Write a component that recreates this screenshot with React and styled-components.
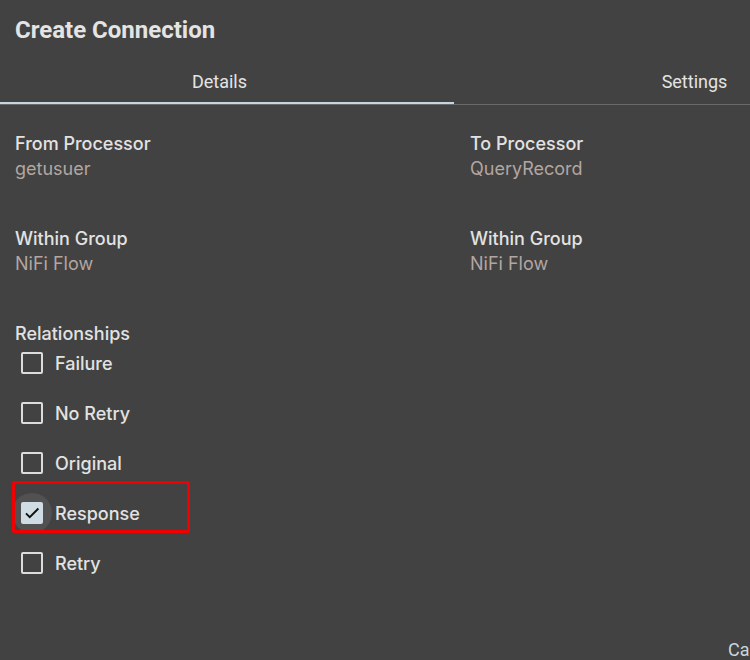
import styled, { createGlobalStyle } from 'styled-components';

const GlobalStyle = createGlobalStyle`
    html, body {
        margin: 0;
        padding: 0;
        background: #424242;
        overflow: hidden;
    }
`;

const relationships = [
    { name: 'Failure', checked: false },
    { name: 'No Retry', checked: false },
    { name: 'Original', checked: false },
    { name: 'Response', checked: true, highlight: true },
    { name: 'Retry', checked: false },
];

export default function App() {
    return (
        <Dialog>
            <GlobalStyle />
            <Title>Create Connection</Title>
            <Tabs>
                <Tab $active $width="454px">Details</Tab>
                <Tab $width="496px">Settings</Tab>
            </Tabs>
            <Body>
                <Grid>
                    <Field>
                        <Label>From Processor</Label>
                        <Value>getusuer</Value>
                    </Field>
                    <Field>
                        <Label>To Processor</Label>
                        <Value>QueryRecord</Value>
                    </Field>
                    <Field>
                        <Label>Within Group</Label>
                        <Value>NiFi Flow</Value>
                    </Field>
                    <Field>
                        <Label>Within Group</Label>
                        <Value>NiFi Flow</Value>
                    </Field>
                </Grid>
                <Label>Relationships</Label>
                <List>
                    {relationships.map(r => (
                        <Row key={r.name}>
                            {r.highlight && <Highlight />}
                            <BoxWrap $checked={r.checked}>
                                <Box $checked={r.checked}>
                                    {r.checked && (
                                        <svg width="20" height="20" viewBox="0 0 24 24">
                                            <path
                                                d="M4 12.5l5 5L20.5 6"
                                                fill="none"
                                                stroke="#111"
                                                strokeWidth="2.6"
                                            />
                                        </svg>
                                    )}
                                </Box>
                            </BoxWrap>
                            <RowText>{r.name}</RowText>
                        </Row>
                    ))}
                </List>
            </Body>
            <Footer>
                <CancelButton>Cancel</CancelButton>
            </Footer>
        </Dialog>
    );
}

const Dialog = styled.div`
    width: 950px;
    height: 660px;
    display: flex;
    flex-direction: column;
    background: #424242;
    font-family: Inter, 'Noto Sans', sans-serif;
`;

const Title = styled.h1`
    margin: 0;
    padding: 16px 15px;
    line-height: 28px;
    font-family: Roboto, 'Liberation Sans', sans-serif;
    font-size: 24px;
    font-weight: 700;
    color: #e4e4e4;
`;

const Tabs = styled.div`
    display: flex;
    border-bottom: 1px solid #6a6a6a;
`;

const Tab = styled.div`
    width: ${p => p.$width};
    height: 44px;
    box-sizing: border-box;
    padding-right: 15px;
    display: flex;
    align-items: center;
    justify-content: center;
    font-family: Roboto, 'Liberation Sans', sans-serif;
    font-size: 18px;
    color: #e4e4e4;
    border-bottom: 2px solid ${p => (p.$active ? '#c7d6de' : 'transparent')};
`;

const Body = styled.div`
    flex: 1;
    padding: 26px 15px 0;
    display: flex;
    flex-direction: column;
`;

const Grid = styled.div`
    display: grid;
    grid-template-columns: 455px 455px;
    row-gap: 45px;
    margin-bottom: 45px;
`;

const Field = styled.div`
    display: flex;
    flex-direction: column;
`;

const Label = styled.div`
    font-size: 18px;
    line-height: 25px;
    font-weight: 500;
    color: #e2e2e2;
`;

const Value = styled.div`
    font-size: 18px;
    line-height: 25px;
    color: #b3a6a1;
`;

const List = styled.div`
    display: flex;
    flex-direction: column;
    gap: 10px;
    margin: -3px 0 0 -3px;
`;

const Row = styled.div`
    position: relative;
    height: 40px;
    display: flex;
    align-items: center;
    gap: 3px;
`;

const Highlight = styled.div`
    position: absolute;
    top: -12px;
    left: 0;
    width: 178px;
    height: 52px;
    box-sizing: border-box;
    border: 3px solid #f00000;
    border-radius: 2px;
    pointer-events: none;
`;

const BoxWrap = styled.div`
    width: 40px;
    height: 40px;
    flex: none;
    display: flex;
    align-items: center;
    justify-content: center;
    border-radius: 50%;
    background: ${p => (p.$checked ? '#515151' : 'transparent')};
`;

const Box = styled.div`
    width: 22px;
    height: 22px;
    box-sizing: border-box;
    border: 2px solid ${p => (p.$checked ? '#cfdce3' : '#dcdcdc')};
    border-radius: 2px;
    background: ${p => (p.$checked ? '#cfdce3' : 'transparent')};
    display: flex;
    align-items: center;
    justify-content: center;
`;

const RowText = styled.span`
    font-size: 18px;
    color: #e2e2e2;
    font-weight: 500;
`;

const Footer = styled.div`
    display: flex;
    height: 21px;
    padding-left: 728px;
`;

const CancelButton = styled.span`
    font-family: Roboto, 'Liberation Sans', sans-serif;
    font-size: 18px;
    line-height: 21px;
    color: #c9d6dd;
`;
